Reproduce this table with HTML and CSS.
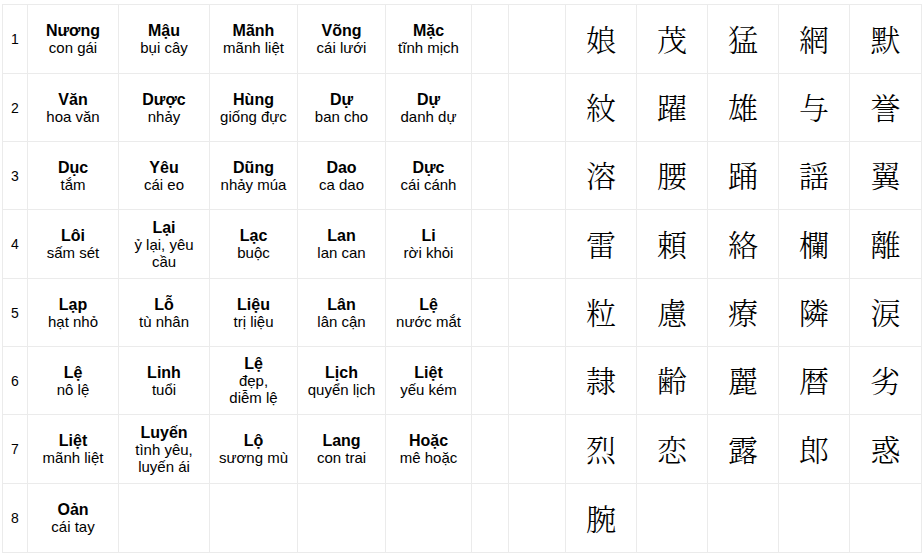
FILE: index.html
```html
<!DOCTYPE html>
<html lang="vi">
<head>
<meta charset="utf-8">
<title>Kanji</title>
<link rel="stylesheet" href="styles.css">
</head>
<body>
<div class="sheet">
  <div class="num">1</div>
  <div class="vn"><b>Nương</b><span>con gái</span></div>
  <div class="vn"><b>Mậu</b><span>bụi cây</span></div>
  <div class="vn"><b>Mãnh</b><span>mãnh liệt</span></div>
  <div class="vn"><b>Võng</b><span>cái lưới</span></div>
  <div class="vn"><b>Mặc</b><span>tĩnh mịch</span></div>
  <div class="blank"></div><div class="blank"></div>
  <div class="kj">娘</div><div class="kj">茂</div><div class="kj">猛</div><div class="kj">網</div><div class="kj">默</div>

  <div class="num">2</div>
  <div class="vn"><b>Văn</b><span>hoa văn</span></div>
  <div class="vn"><b>Dược</b><span>nhảy</span></div>
  <div class="vn"><b>Hùng</b><span>giống đực</span></div>
  <div class="vn"><b>Dự</b><span>ban cho</span></div>
  <div class="vn"><b>Dự</b><span>danh dự</span></div>
  <div class="blank"></div><div class="blank"></div>
  <div class="kj">紋</div><div class="kj">躍</div><div class="kj">雄</div><div class="kj">与</div><div class="kj">誉</div>

  <div class="num">3</div>
  <div class="vn"><b>Dục</b><span>tắm</span></div>
  <div class="vn"><b>Yêu</b><span>cái eo</span></div>
  <div class="vn"><b>Dũng</b><span>nhảy múa</span></div>
  <div class="vn"><b>Dao</b><span>ca dao</span></div>
  <div class="vn"><b>Dực</b><span>cái cánh</span></div>
  <div class="blank"></div><div class="blank"></div>
  <div class="kj">溶</div><div class="kj">腰</div><div class="kj">踊</div><div class="kj">謡</div><div class="kj">翼</div>

  <div class="num">4</div>
  <div class="vn"><b>Lôi</b><span>sấm sét</span></div>
  <div class="vn"><b>Lại</b><span>ỷ lại, yêu<br>cầu</span></div>
  <div class="vn"><b>Lạc</b><span>buộc</span></div>
  <div class="vn"><b>Lan</b><span>lan can</span></div>
  <div class="vn"><b>Li</b><span>rời khỏi</span></div>
  <div class="blank"></div><div class="blank"></div>
  <div class="kj">雷</div><div class="kj">頼</div><div class="kj">絡</div><div class="kj">欄</div><div class="kj">離</div>

  <div class="num">5</div>
  <div class="vn"><b>Lạp</b><span>hạt nhỏ</span></div>
  <div class="vn"><b>Lỗ</b><span>tù nhân</span></div>
  <div class="vn"><b>Liệu</b><span>trị liệu</span></div>
  <div class="vn"><b>Lân</b><span>lân cận</span></div>
  <div class="vn"><b>Lệ</b><span>nước mắt</span></div>
  <div class="blank"></div><div class="blank"></div>
  <div class="kj">粒</div><div class="kj">慮</div><div class="kj">療</div><div class="kj">隣</div><div class="kj">涙</div>

  <div class="num">6</div>
  <div class="vn"><b>Lệ</b><span>nô lệ</span></div>
  <div class="vn"><b>Linh</b><span>tuổi</span></div>
  <div class="vn"><b>Lệ</b><span>đẹp,<br>diễm lệ</span></div>
  <div class="vn"><b>Lịch</b><span>quyển lịch</span></div>
  <div class="vn"><b>Liệt</b><span>yếu kém</span></div>
  <div class="blank"></div><div class="blank"></div>
  <div class="kj">隷</div><div class="kj">齢</div><div class="kj">麗</div><div class="kj">暦</div><div class="kj">劣</div>

  <div class="num">7</div>
  <div class="vn"><b>Liệt</b><span>mãnh liệt</span></div>
  <div class="vn"><b>Luyến</b><span>tình yêu,<br>luyến ái</span></div>
  <div class="vn"><b>Lộ</b><span>sương mù</span></div>
  <div class="vn"><b>Lang</b><span>con trai</span></div>
  <div class="vn"><b>Hoặc</b><span>mê hoặc</span></div>
  <div class="blank"></div><div class="blank"></div>
  <div class="kj">烈</div><div class="kj">恋</div><div class="kj">露</div><div class="kj">郎</div><div class="kj">惑</div>

  <div class="num">8</div>
  <div class="vn"><b>Oản</b><span>cái tay</span></div>
  <div class="blank"></div><div class="blank"></div><div class="blank"></div><div class="blank"></div>
  <div class="blank"></div><div class="blank"></div>
  <div class="kj">腕</div><div class="blank"></div><div class="blank"></div><div class="blank"></div><div class="blank"></div>
</div>
</body>
</html>
```
FILE: styles.css
```css
html, body {
  margin: 0;
  padding: 0;
  background: #ffffff;
}

body {
  padding: 4px 0 0 2px;
  font-family: "Liberation Sans", Arial, sans-serif;
  color: #000;
}

.sheet {
  display: grid;
  grid-template-columns: 24px 90px 90px 87px 87px 85px 36px 56px 70px 70px 70px 70px 71px;
  grid-template-rows: 68px 67px 67px 68px 67px 67px 68px 68px;
  gap: 1px;
  padding: 1px;
  background: #ebebeb;
  width: max-content;
}

.sheet > div {
  background: #fff;
}

.num {
  display: flex;
  align-items: center;
  padding-left: 8px;
  font-size: 14px;
}

.vn {
  display: flex;
  flex-direction: column;
  align-items: center;
  justify-content: center;
  text-align: center;
  padding: 0 4px;
}

.vn b {
  font-size: 16px;
  line-height: 17px;
  font-weight: 700;
}

.vn span {
  font-size: 15px;
  line-height: 17px;
}

.kj {
  display: flex;
  align-items: center;
  justify-content: center;
  padding-bottom: 3px;
  font-family: "Noto Serif CJK JP", "Noto Sans CJK JP", serif;
  font-size: 30px;
  font-weight: 300;
}
```
